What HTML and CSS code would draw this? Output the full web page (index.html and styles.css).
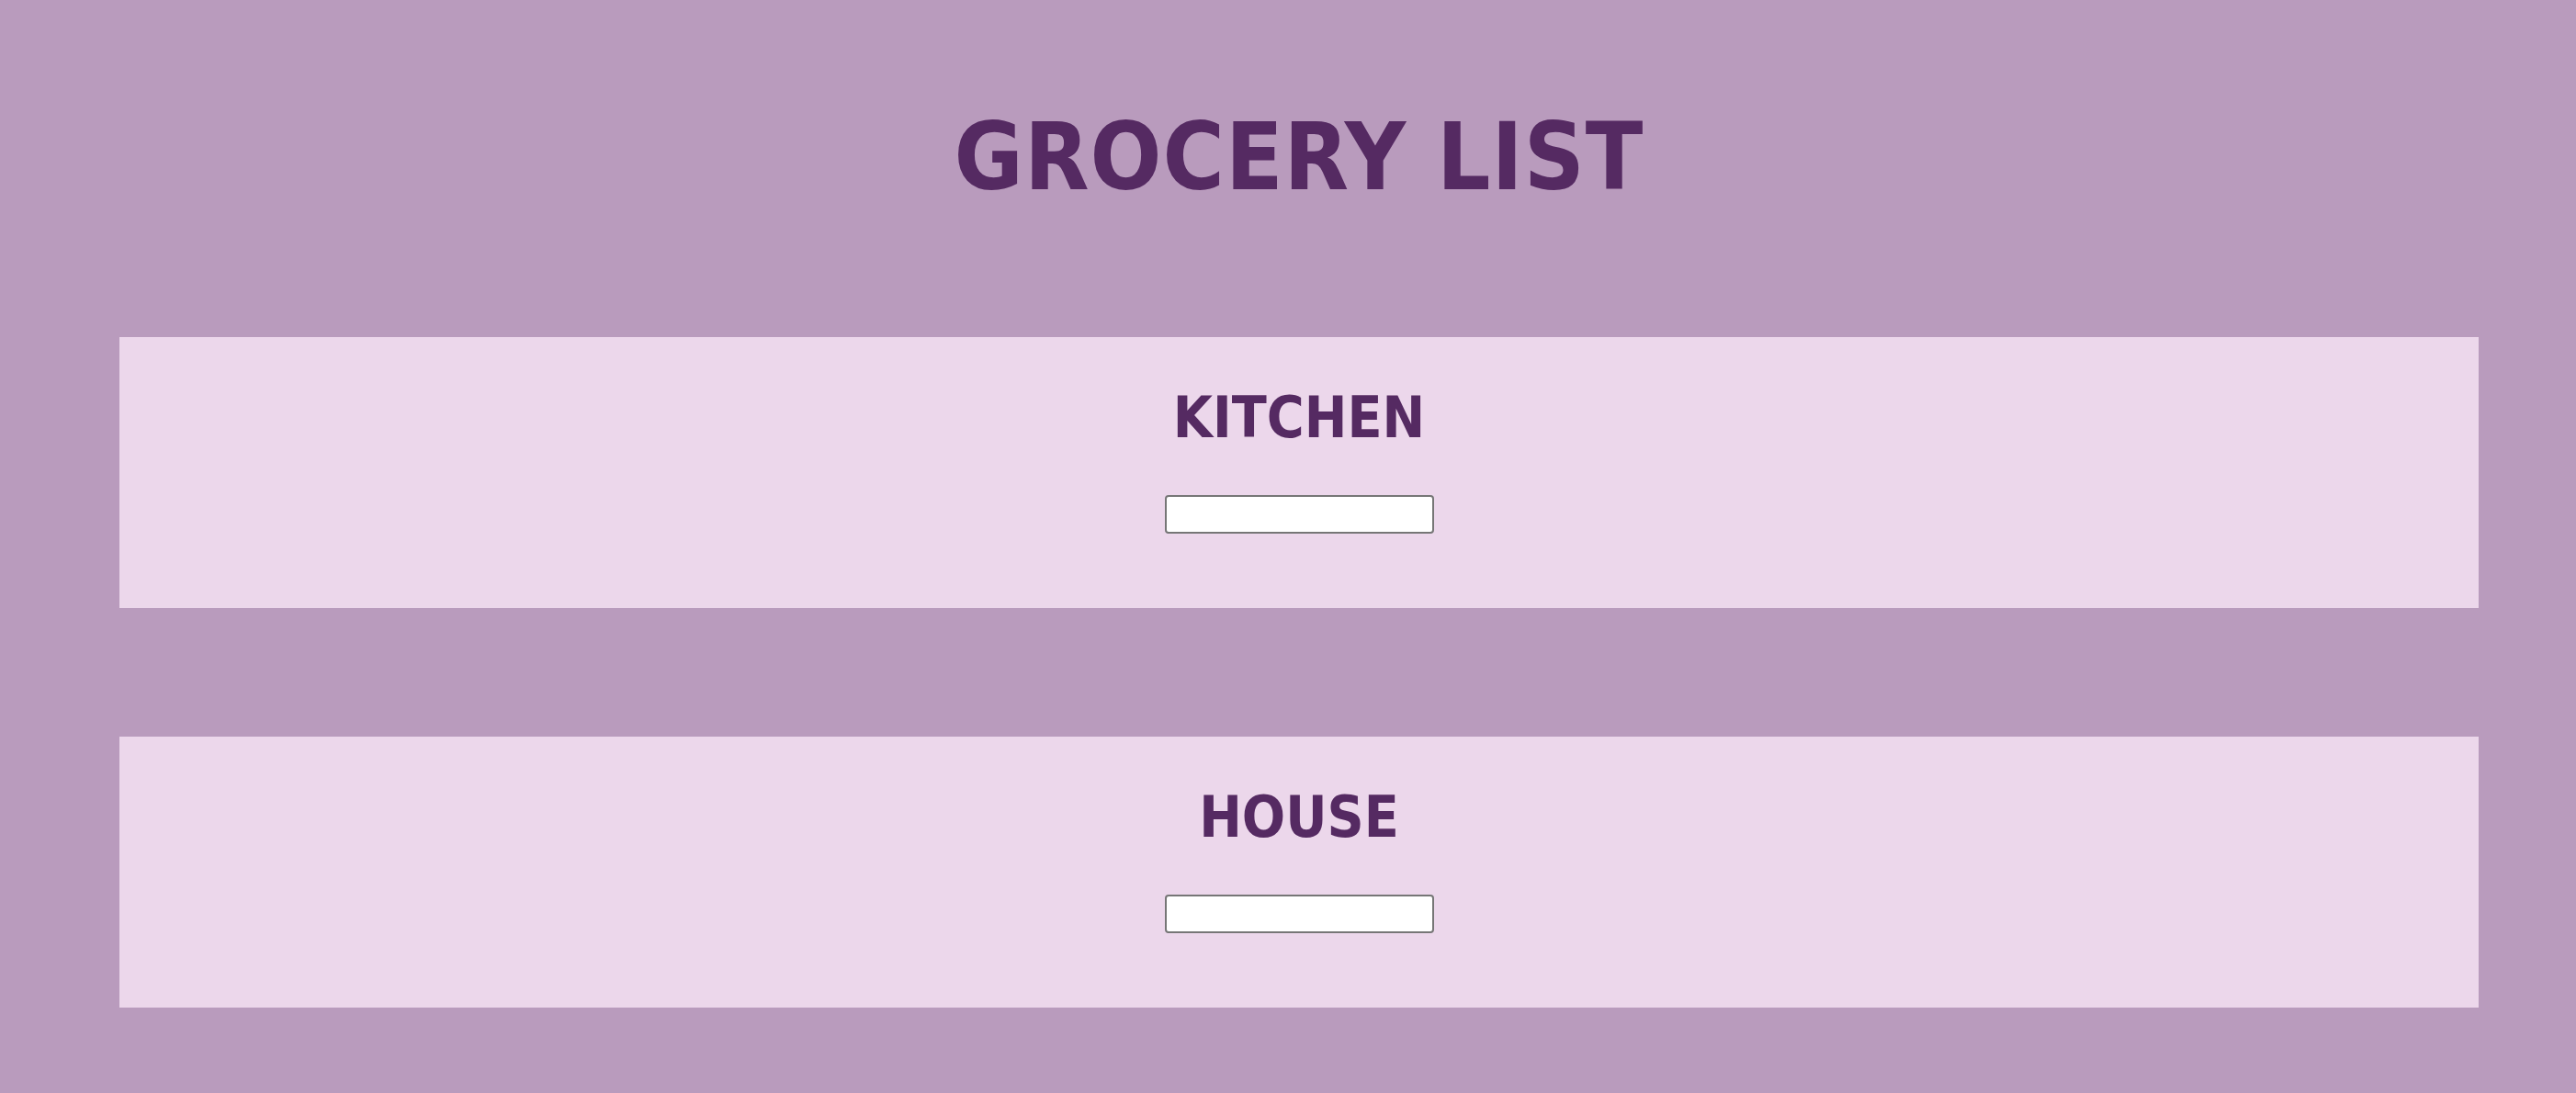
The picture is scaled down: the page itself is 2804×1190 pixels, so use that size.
FILE: index.html
```html
<!DOCTYPE html>
<html lang="en">
<head>
<meta charset="utf-8">
<title>Grocery List</title>
<link rel="stylesheet" href="styles.css">
</head>
<body>
<main class="page">
  <h1 class="title">GROCERY LIST</h1>
  <section class="card">
    <h2 class="card-title">KITCHEN</h2>
    <input class="item-input" type="text">
  </section>
  <section class="card">
    <h2 class="card-title">HOUSE</h2>
    <input class="item-input" type="text">
  </section>
</main>
</body>
</html>
```

FILE: styles.css
```css
html, body {
  margin: 0;
  padding: 0;
}

body {
  background: #b99bbd;
  font-family: "DejaVu Sans Condensed", "DejaVu Sans", Verdana, sans-serif;
  font-stretch: condensed;
  color: #552a62;
  min-height: 1190px;
}

.page {
  display: flex;
  flex-direction: column;
  padding: 120px 106px 0 130px;
}

.title {
  margin: 0 0 145px;
  font-size: 102px;
  line-height: 1;
  font-weight: bold;
  letter-spacing: 1px;
  text-align: center;
}

.card {
  background: #ecd7eb;
  display: flex;
  flex-direction: column;
  align-items: center;
  padding: 57px 0 81px;
  margin-bottom: 140px;
}

.card-title {
  margin: 0 0 53px;
  font-size: 62px;
  line-height: 1;
  font-weight: bold;
}

.item-input {
  box-sizing: border-box;
  width: 293px;
  height: 42px;
  margin: 0;
  border: 2px solid #767676;
  border-radius: 4px;
  background: #ffffff;
  padding: 2px 6px;
  font-size: 24px;
}
```
